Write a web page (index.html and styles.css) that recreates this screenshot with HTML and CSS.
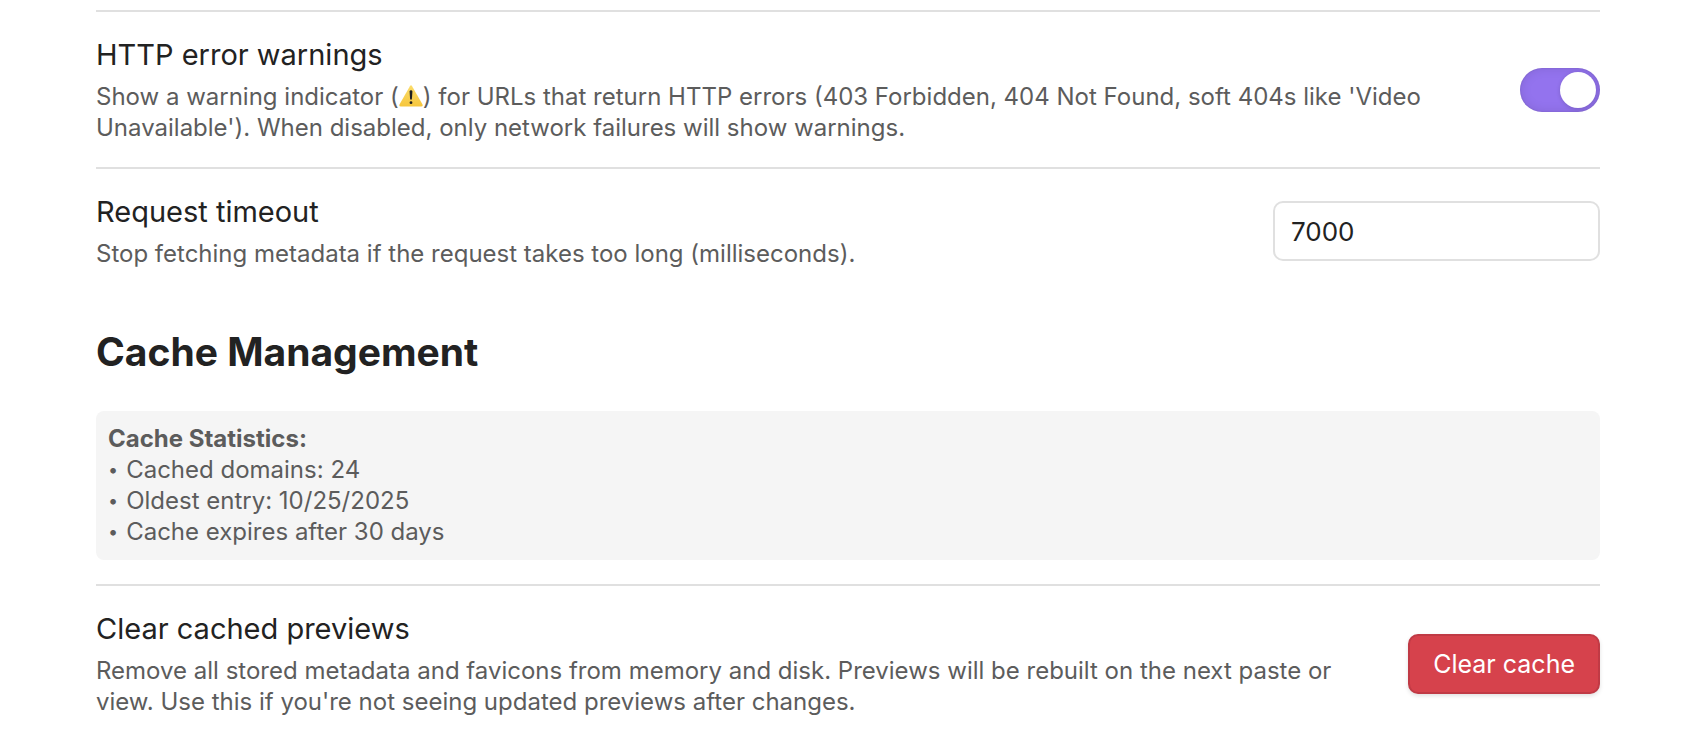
FILE: index.html
```html
<!DOCTYPE html>
<html lang="en">
<head>
<meta charset="utf-8">
<meta name="viewport" content="width=device-width, initial-scale=1">
<title>Settings</title>
<link rel="stylesheet" href="styles.css">
</head>
<body>
<main class="settings">
  <section class="row">
    <div class="info">
      <label class="name" for="http-warnings">HTTP error warnings</label>
      <p class="desc" id="http-desc">Show a warning indicator (<svg class="warn" viewBox="0 0 24 22" role="img" aria-label="warning"><defs><linearGradient id="amber" x1="0" y1="0" x2="0" y2="1"><stop offset="0" stop-color="#fbdc6a"/><stop offset="1" stop-color="#f6c63c"/></linearGradient></defs><path d="M10.9 1.2Q12 -.6 13.1 1.2L23.4 19.3Q24.3 21.4 22.2 21.5H1.8Q-.3 21.4 .6 19.3Z" fill="url(#amber)"/><path d="M10.6 6.5Q10.7 5.3 12 5.3T13.4 6.5L12.9 14Q12.7 14.8 12 14.8T11.1 14Z" fill="#1f1f1f"/><circle cx="12" cy="17.7" r="1.4" fill="#1f1f1f"/></svg>) for URLs that return HTTP errors (403 Forbidden, 404 Not Found, soft 404s like 'Video Unavailable'). When disabled, only network failures will show warnings.</p>
    </div>
    <input class="toggle" type="checkbox" role="switch" id="http-warnings" aria-describedby="http-desc" checked>
  </section>
  <section class="row">
    <div class="info">
      <label class="name" for="timeout">Request timeout</label>
      <p class="desc" id="timeout-desc">Stop fetching metadata if the request takes too long (milliseconds).</p>
    </div>
    <input class="field" type="text" inputmode="numeric" id="timeout" aria-describedby="timeout-desc" value="7000">
  </section>
  <h2 class="heading">Cache Management</h2>
  <div class="stats">
    <strong class="stats-title">Cache Statistics:</strong>
    <ul class="stats-list">
      <li>Cached domains: 24</li>
      <li>Oldest entry: 10/25/2025</li>
      <li>Cache expires after 30 days</li>
    </ul>
  </div>
  <section class="row">
    <div class="info">
      <h3 class="name">Clear cached previews</h3>
      <p class="desc" id="clear-desc">Remove all stored metadata and favicons from memory and disk. Previews will be rebuilt on the next paste or view. Use this if you're not seeing updated previews after changes.</p>
    </div>
    <button class="danger" type="button" aria-describedby="clear-desc">Clear cache</button>
  </section>
</main>
</body>
</html>
```
FILE: styles.css
```css
* {
  box-sizing: border-box;
}

body {
  margin: 0;
  background: #fff;
  color: #222;
  font-family: Inter, "Liberation Sans", sans-serif;
}

.settings {
  padding: 10px 96px 0;
}

.row {
  display: flex;
  align-items: center;
  gap: 36px;
  padding: 24px 0;
  border-top: 2px solid #e0e0e0;
}

.info {
  flex: 1;
  display: flex;
  flex-direction: column;
  align-items: flex-start;
  gap: 7px;
}

.name {
  margin: 0;
  font-size: 29px;
  font-weight: 400;
  line-height: 38px;
}

.desc {
  margin: 0;
  color: #5c5c5c;
  font-size: 24px;
  line-height: 31px;
}

.warn {
  width: 24px;
  height: 22px;
  vertical-align: -2px;
}

.toggle {
  appearance: none;
  display: flex;
  align-items: center;
  justify-content: flex-end;
  flex: none;
  width: 80px;
  height: 44px;
  margin: 0;
  padding: 4px;
  border-radius: 22px;
  background: #9373ee;
  box-shadow: inset 0 0 12px rgba(0, 0, 0, 0.1), inset 0 0 2px rgba(0, 0, 0, 0.15);
}

.toggle::before {
  content: "";
  width: 36px;
  height: 36px;
  border-radius: 50%;
  background: #fff;
  box-shadow: 0 1px 4px rgba(0, 0, 0, 0.15);
}

.toggle:not(:checked) {
  justify-content: flex-start;
  background: #d4d4d4;
}

.field {
  flex: none;
  width: 327px;
  height: 60px;
  padding: 0 16px;
  border: 2px solid #e0e0e0;
  border-radius: 10px;
  background: #fff;
  color: #222;
  font: 400 26px Inter, "Liberation Sans", sans-serif;
}

.heading {
  margin: 32px 0;
  font-size: 39px;
  font-weight: 700;
  line-height: 54px;
}

.stats {
  margin-bottom: 24px;
  padding: 12px 12px 13px;
  border-radius: 8px;
  background: #f5f5f5;
  color: #5c5c5c;
  font-size: 24px;
  line-height: 31px;
}

.stats-title {
  display: block;
  font-weight: 700;
}

.stats-list {
  margin: 0;
  padding: 0;
  list-style: none;
}

.stats-list li {
  display: flex;
  align-items: center;
  gap: 8px;
}

.stats-list li::before {
  content: "•";
  font-size: 18px;
}

.danger {
  flex: none;
  height: 60px;
  padding: 0 23px;
  border: 2px solid #c03a45;
  border-radius: 10px;
  background: #d6424c;
  box-shadow: 0 2px 4px rgba(0, 0, 0, 0.12);
  color: #fff;
  font: 400 25px Inter, "Liberation Sans", sans-serif;
}
```
